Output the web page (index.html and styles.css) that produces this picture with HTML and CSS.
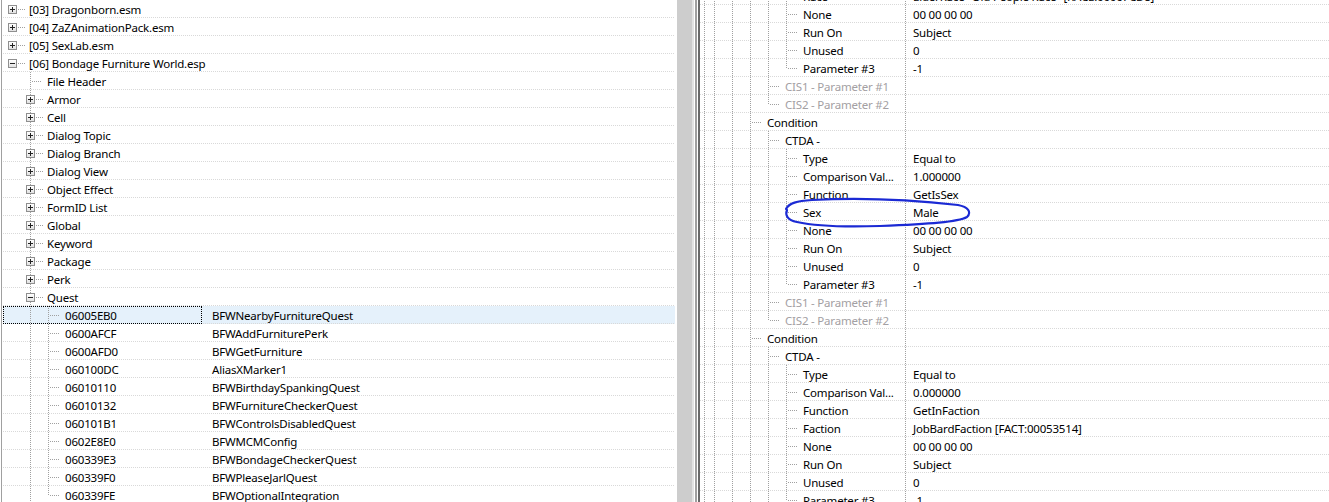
FILE: index.html
```html
<!DOCTYPE html>
<html lang="en">
<head>
<meta charset="utf-8">
<title>xEdit</title>
<link rel="stylesheet" href="styles.css">
</head>
<body>
<div class="app">
  <!-- navigation tree: plugins, record groups, records -->
  <div class="pane-left">
    <div class="tree">
      <div class="row"><span class="n stub exp"><i class="bx plus"></i></span><span class="t">[03] Dragonborn.esm</span></div>
      <div class="row"><span class="n stub exp"><i class="bx plus"></i></span><span class="t">[04] ZaZAnimationPack.esm</span></div>
      <div class="row"><span class="n stub exp"><i class="bx plus"></i></span><span class="t">[05] SexLab.esm</span></div>
      <div class="row"><span class="n stub exp"><i class="bx"></i></span><span class="t">[06] Bondage Furniture World.esp</span></div>
      <div class="row"><span class="g"></span><span class="n tee"></span><span class="t">File Header</span></div>
      <div class="row"><span class="g"></span><span class="n tee exp"><i class="bx plus"></i></span><span class="t">Armor</span></div>
      <div class="row"><span class="g"></span><span class="n tee exp"><i class="bx plus"></i></span><span class="t">Cell</span></div>
      <div class="row"><span class="g"></span><span class="n tee exp"><i class="bx plus"></i></span><span class="t">Dialog Topic</span></div>
      <div class="row"><span class="g"></span><span class="n tee exp"><i class="bx plus"></i></span><span class="t">Dialog Branch</span></div>
      <div class="row"><span class="g"></span><span class="n tee exp"><i class="bx plus"></i></span><span class="t">Dialog View</span></div>
      <div class="row"><span class="g"></span><span class="n tee exp"><i class="bx plus"></i></span><span class="t">Object Effect</span></div>
      <div class="row"><span class="g"></span><span class="n tee exp"><i class="bx plus"></i></span><span class="t">FormID List</span></div>
      <div class="row"><span class="g"></span><span class="n tee exp"><i class="bx plus"></i></span><span class="t">Global</span></div>
      <div class="row"><span class="g"></span><span class="n tee exp"><i class="bx plus"></i></span><span class="t">Keyword</span></div>
      <div class="row"><span class="g"></span><span class="n tee exp"><i class="bx plus"></i></span><span class="t">Package</span></div>
      <div class="row"><span class="g"></span><span class="n tee exp"><i class="bx plus"></i></span><span class="t">Perk</span></div>
      <div class="row"><span class="g"></span><span class="n tee exp"><i class="bx"></i></span><span class="t">Quest</span></div>
      <div class="row sel"><span class="nm focus"><span class="g"></span><span class="g v"></span><span class="n tee"></span><span class="t">06005EB0</span></span><span class="val">BFWNearbyFurnitureQuest</span></div>
      <div class="row"><span class="nm"><span class="g"></span><span class="g v"></span><span class="n tee"></span><span class="t">0600AFCF</span></span><span class="val">BFWAddFurniturePerk</span></div>
      <div class="row"><span class="nm"><span class="g"></span><span class="g v"></span><span class="n tee"></span><span class="t">0600AFD0</span></span><span class="val">BFWGetFurniture</span></div>
      <div class="row"><span class="nm"><span class="g"></span><span class="g v"></span><span class="n tee"></span><span class="t">060100DC</span></span><span class="val">AliasXMarker1</span></div>
      <div class="row"><span class="nm"><span class="g"></span><span class="g v"></span><span class="n tee"></span><span class="t">06010110</span></span><span class="val">BFWBirthdaySpankingQuest</span></div>
      <div class="row"><span class="nm"><span class="g"></span><span class="g v"></span><span class="n tee"></span><span class="t">06010132</span></span><span class="val">BFWFurnitureCheckerQuest</span></div>
      <div class="row"><span class="nm"><span class="g"></span><span class="g v"></span><span class="n tee"></span><span class="t">060101B1</span></span><span class="val">BFWControlsDisabledQuest</span></div>
      <div class="row"><span class="nm"><span class="g"></span><span class="g v"></span><span class="n tee"></span><span class="t">0602E8E0</span></span><span class="val">BFWMCMConfig</span></div>
      <div class="row"><span class="nm"><span class="g"></span><span class="g v"></span><span class="n tee"></span><span class="t">060339E3</span></span><span class="val">BFWBondageCheckerQuest</span></div>
      <div class="row"><span class="nm"><span class="g"></span><span class="g v"></span><span class="n tee"></span><span class="t">060339F0</span></span><span class="val">BFWPleaseJarlQuest</span></div>
      <div class="row"><span class="nm"><span class="g"></span><span class="g v"></span><span class="n elbow"></span><span class="t">060339FE</span></span><span class="val">BFWOptionalIntegration</span></div>
    </div>
  </div>

  <div class="splitter"></div>

  <!-- record view: conditions of the selected quest -->
  <div class="pane-right">
    <div class="tree">
      <div class="row"><span class="nm"><span class="g root v"></span><span class="g v"></span><span class="g v"></span><span class="g v"></span><span class="g v"></span><span class="n tee"></span><span class="t">Race</span></span><span class="val">ElderRace "Old People Race" [RACE:00067CD8]</span></div>
      <div class="row"><span class="nm"><span class="g root v"></span><span class="g v"></span><span class="g v"></span><span class="g v"></span><span class="g v"></span><span class="n tee"></span><span class="t">None</span></span><span class="val">00 00 00 00</span></div>
      <div class="row"><span class="nm"><span class="g root v"></span><span class="g v"></span><span class="g v"></span><span class="g v"></span><span class="g v"></span><span class="n tee"></span><span class="t">Run On</span></span><span class="val">Subject</span></div>
      <div class="row"><span class="nm"><span class="g root v"></span><span class="g v"></span><span class="g v"></span><span class="g v"></span><span class="g v"></span><span class="n tee"></span><span class="t">Unused</span></span><span class="val">0</span></div>
      <div class="row"><span class="nm"><span class="g root v"></span><span class="g v"></span><span class="g v"></span><span class="g v"></span><span class="g v"></span><span class="n elbow"></span><span class="t">Parameter #3</span></span><span class="val">-1</span></div>
      <div class="row"><span class="nm"><span class="g root v"></span><span class="g v"></span><span class="g v"></span><span class="g v"></span><span class="n tee"></span><span class="t dim">CIS1 - Parameter #1</span></span><span class="val"></span></div>
      <div class="row"><span class="nm"><span class="g root v"></span><span class="g v"></span><span class="g v"></span><span class="g v"></span><span class="n elbow"></span><span class="t dim">CIS2 - Parameter #2</span></span><span class="val"></span></div>
      <div class="row"><span class="nm"><span class="g root v"></span><span class="g v"></span><span class="g v"></span><span class="n tee"></span><span class="t">Condition</span></span><span class="val"></span></div>
      <div class="row"><span class="nm"><span class="g root v"></span><span class="g v"></span><span class="g v"></span><span class="g v"></span><span class="n tee"></span><span class="t">CTDA -</span></span><span class="val"></span></div>
      <div class="row"><span class="nm"><span class="g root v"></span><span class="g v"></span><span class="g v"></span><span class="g v"></span><span class="g v"></span><span class="n tee"></span><span class="t">Type</span></span><span class="val">Equal to</span></div>
      <div class="row"><span class="nm"><span class="g root v"></span><span class="g v"></span><span class="g v"></span><span class="g v"></span><span class="g v"></span><span class="n tee"></span><span class="t">Comparison Val...</span></span><span class="val">1.000000</span></div>
      <div class="row"><span class="nm"><span class="g root v"></span><span class="g v"></span><span class="g v"></span><span class="g v"></span><span class="g v"></span><span class="n tee"></span><span class="t">Function</span></span><span class="val">GetIsSex</span></div>
      <div class="row"><span class="nm"><span class="g root v"></span><span class="g v"></span><span class="g v"></span><span class="g v"></span><span class="g v"></span><span class="n tee"></span><span class="t">Sex</span></span><span class="val">Male</span></div>
      <div class="row"><span class="nm"><span class="g root v"></span><span class="g v"></span><span class="g v"></span><span class="g v"></span><span class="g v"></span><span class="n tee"></span><span class="t">None</span></span><span class="val">00 00 00 00</span></div>
      <div class="row"><span class="nm"><span class="g root v"></span><span class="g v"></span><span class="g v"></span><span class="g v"></span><span class="g v"></span><span class="n tee"></span><span class="t">Run On</span></span><span class="val">Subject</span></div>
      <div class="row"><span class="nm"><span class="g root v"></span><span class="g v"></span><span class="g v"></span><span class="g v"></span><span class="g v"></span><span class="n tee"></span><span class="t">Unused</span></span><span class="val">0</span></div>
      <div class="row"><span class="nm"><span class="g root v"></span><span class="g v"></span><span class="g v"></span><span class="g v"></span><span class="g v"></span><span class="n elbow"></span><span class="t">Parameter #3</span></span><span class="val">-1</span></div>
      <div class="row"><span class="nm"><span class="g root v"></span><span class="g v"></span><span class="g v"></span><span class="g v"></span><span class="n tee"></span><span class="t dim">CIS1 - Parameter #1</span></span><span class="val"></span></div>
      <div class="row"><span class="nm"><span class="g root v"></span><span class="g v"></span><span class="g v"></span><span class="g v"></span><span class="n elbow"></span><span class="t dim">CIS2 - Parameter #2</span></span><span class="val"></span></div>
      <div class="row"><span class="nm"><span class="g root v"></span><span class="g v"></span><span class="g v"></span><span class="n tee"></span><span class="t">Condition</span></span><span class="val"></span></div>
      <div class="row"><span class="nm"><span class="g root v"></span><span class="g v"></span><span class="g v"></span><span class="g v"></span><span class="n tee"></span><span class="t">CTDA -</span></span><span class="val"></span></div>
      <div class="row"><span class="nm"><span class="g root v"></span><span class="g v"></span><span class="g v"></span><span class="g v"></span><span class="g v"></span><span class="n tee"></span><span class="t">Type</span></span><span class="val">Equal to</span></div>
      <div class="row"><span class="nm"><span class="g root v"></span><span class="g v"></span><span class="g v"></span><span class="g v"></span><span class="g v"></span><span class="n tee"></span><span class="t">Comparison Val...</span></span><span class="val">0.000000</span></div>
      <div class="row"><span class="nm"><span class="g root v"></span><span class="g v"></span><span class="g v"></span><span class="g v"></span><span class="g v"></span><span class="n tee"></span><span class="t">Function</span></span><span class="val">GetInFaction</span></div>
      <div class="row"><span class="nm"><span class="g root v"></span><span class="g v"></span><span class="g v"></span><span class="g v"></span><span class="g v"></span><span class="n tee"></span><span class="t">Faction</span></span><span class="val">JobBardFaction [FACT:00053514]</span></div>
      <div class="row"><span class="nm"><span class="g root v"></span><span class="g v"></span><span class="g v"></span><span class="g v"></span><span class="g v"></span><span class="n tee"></span><span class="t">None</span></span><span class="val">00 00 00 00</span></div>
      <div class="row"><span class="nm"><span class="g root v"></span><span class="g v"></span><span class="g v"></span><span class="g v"></span><span class="g v"></span><span class="n tee"></span><span class="t">Run On</span></span><span class="val">Subject</span></div>
      <div class="row"><span class="nm"><span class="g root v"></span><span class="g v"></span><span class="g v"></span><span class="g v"></span><span class="g v"></span><span class="n tee"></span><span class="t">Unused</span></span><span class="val">0</span></div>
      <div class="row"><span class="nm"><span class="g root v"></span><span class="g v"></span><span class="g v"></span><span class="g v"></span><span class="g v"></span><span class="n elbow"></span><span class="t">Parameter #3</span></span><span class="val">-1</span></div>
    </div>
  </div>
</div>

<!-- pen annotation circling the Sex field -->
<svg class="mark" viewBox="0 0 1329 502" aria-hidden="true">
  <path d="M786 209 C789 203 797 201 812 200 C850 198 905 199 958 205 C968 207 972 212 967 217 C958 222 930 224 880 226 C850 227 815 226 797 222 C787 220 785 215 787 210" />
</svg>
</body>
</html>
```

FILE: styles.css
```css
* {
  box-sizing: border-box;
}

html,
body {
  margin: 0;
  padding: 0;
}

body {
  position: relative;
  width: 1329px;
  height: 502px;
  overflow: hidden;
  background: #fff;
  color: #000;
  font-family: "Noto Sans", "Segoe UI", sans-serif;
  font-size: 11.5px;
  letter-spacing: -0.2px;
  --ln: #a0a0a0;
  --grid: #d9d9d9;
}

.app {
  display: flex;
  height: 502px;
}

/* ---------- panes ---------- */

.pane-left {
  flex: none;
  width: 676px;
  margin-left: 1px;
  padding: 0 2px 0 1px;
  border-left: 1px solid #a0a0a0;
  overflow: hidden;
}

.splitter {
  flex: none;
  width: 23px;
  background: linear-gradient(to right,
      #cdcdcd 0 15px,
      #e3e3e3 15px 17px,
      #fff 17px 18px,
      #a0a0a0 18px 20px,
      #fff 20px 21px,
      #6a6a6a 21px 23px);
}

.pane-right {
  flex: 1;
  overflow: hidden;
}

.pane-right .tree {
  margin-top: -13px;
}

/* ---------- rows ---------- */

.row {
  display: flex;
  height: 18px;
  white-space: nowrap;
  background: repeating-linear-gradient(to right, var(--grid) 0 1px, transparent 1px 2px) 0 17px / 100% 1px no-repeat;
}

.row.sel {
  background-color: #e5f1fb;
}

.t {
  padding-top: 1px;
  line-height: 17px;
}

.dim {
  color: #a3a0a3;
}

.nm {
  display: flex;
  flex: none;
  height: 18px;
  width: 205px;
  overflow: hidden;
}

.pane-left .nm {
  width: 199px;
  overflow: visible;
}

.focus {
  outline: 1px dotted #000;
  outline-offset: -1px;
}

.val {
  flex: 1;
  height: 18px;
  padding-top: 1px;
  line-height: 17px;
  padding-left: 8px;
  background: repeating-linear-gradient(to bottom, var(--ln) 0 1px, transparent 1px 2px) 0 0 / 1px 100% no-repeat;
}

.pane-left .val {
  padding-left: 10px;
  background: none;
}

/* ---------- tree lines ---------- */

.g {
  flex: none;
  width: 18px;
  height: 18px;
}

.g.root {
  width: 5px;
}

.g.v {
  background: repeating-linear-gradient(to bottom, var(--ln) 0 1px, transparent 1px 2px) 9px 0 / 1px 100% no-repeat;
}

.g.root.v {
  background-position: 4px 0;
}

.n {
  --hx: 11px;
  --hw: 10px;
  --vh: 100%;
  flex: none;
  display: flex;
  align-items: flex-start;
  width: 26px;
  height: 18px;
  padding: 5px 0 0 5px;
  background:
    repeating-linear-gradient(to right, var(--ln) 0 1px, transparent 1px 2px) var(--hx) 9px / var(--hw) 1px no-repeat,
    repeating-linear-gradient(to bottom, var(--ln) 0 1px, transparent 1px 2px) 9px 0 / 1px var(--vh) no-repeat;
}

.n.elbow {
  --vh: 10px;
}

.n.stub {
  --vh: 0px;
}

.n.exp {
  --hx: 15px;
  --hw: 8px;
}

/* expand / collapse button */
.bx {
  display: block;
  width: 9px;
  height: 9px;
  border: 1px solid #8f8f8f;
  background:
    linear-gradient(#222, #222) 1px 3px / 5px 1px no-repeat,
    linear-gradient(#fff, #e2e2e2);
}

.bx.plus {
  background:
    linear-gradient(#222, #222) 1px 3px / 5px 1px no-repeat,
    linear-gradient(#222, #222) 3px 1px / 1px 5px no-repeat,
    linear-gradient(#fff, #e2e2e2);
}

/* ---------- pen annotation ---------- */

.mark {
  position: absolute;
  left: 0;
  top: 0;
  width: 1329px;
  height: 502px;
  pointer-events: none;
}

.mark path {
  fill: none;
  stroke: #1b2ad4;
  stroke-width: 2.2;
  stroke-linecap: round;
  stroke-linejoin: round;
}
```
